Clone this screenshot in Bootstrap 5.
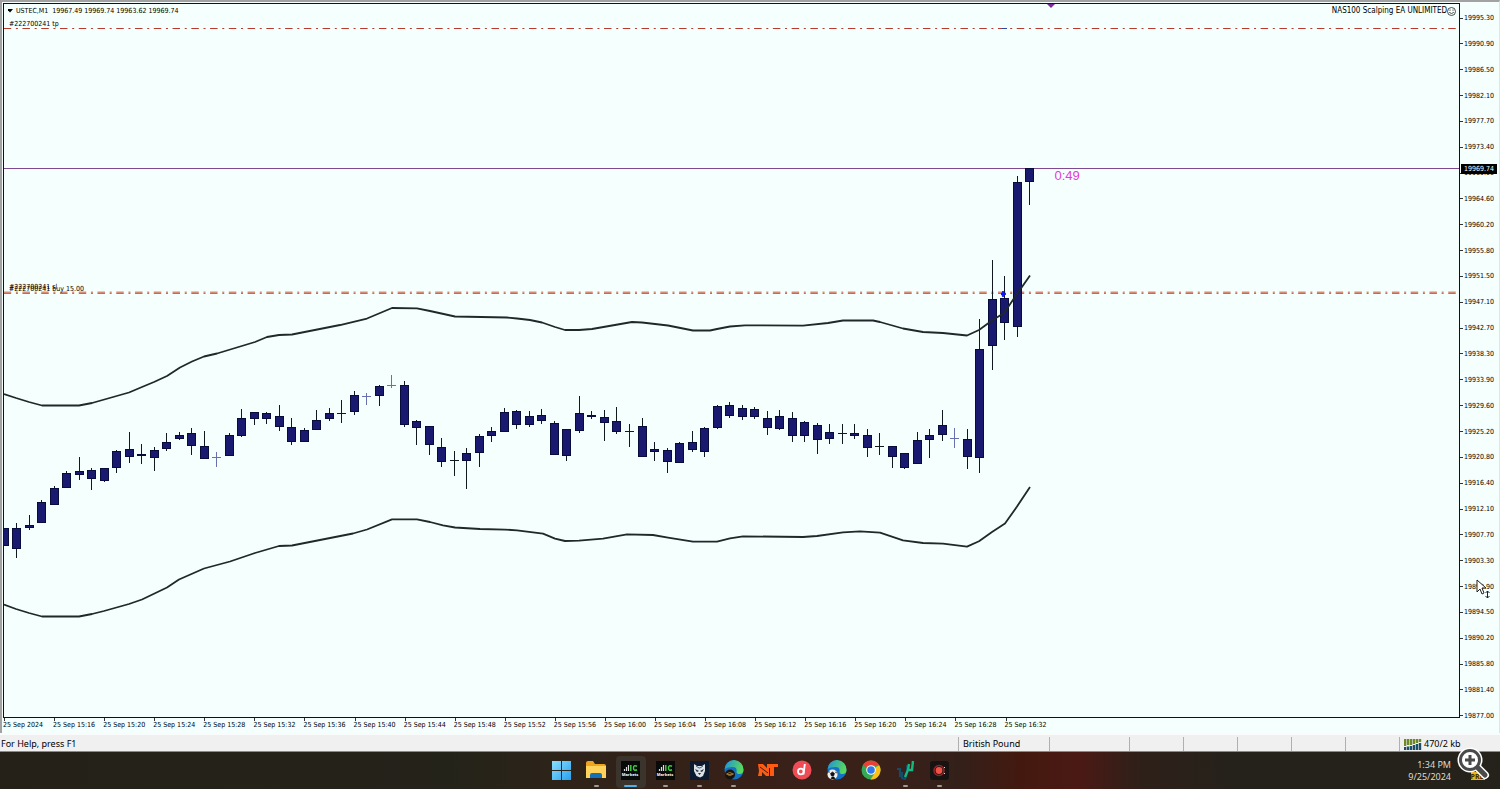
<!DOCTYPE html>
<html lang="en">
<head>
<meta charset="utf-8">
<meta name="viewport" content="width=device-width, initial-scale=1">
<title>USTEC,M1</title>
<link href="https://cdn.jsdelivr.net/npm/bootstrap@5.3.0/dist/css/bootstrap.min.css" rel="stylesheet">
<style>
  body { background: #f5fffd; font-family: "Noto Sans", sans-serif; color: #000; }
  .terminal { border-top: 2px solid #a2a2a2; border-left: 2px solid #a2a2a2; border-right: 1px solid #dfe6e4; padding: 1px 0 0 1px; font: 7px/10px "DejaVu Sans Condensed", "DejaVu Sans", sans-serif; }
  .plot { border: 1px solid #111; min-width: 0; min-height: 0; }
  .plot-svg { position: absolute; inset: 0; width: 100%; height: 100%; display: block; }
  .heading { padding: 2px 3px 0 4px; white-space: pre; }
  .expert { font-size: 8px; }
  .over { position: absolute; white-space: pre; }
  .order-tp { left: 5px; top: 2%; margin-top: 1px; }
  .order-sl { left: 5px; top: 39%; }
  .order-buy { left: 5px; top: 39%; margin-top: 2px; }
  .countdown { left: 72.2%; top: 23%; font: 13px/16px "Liberation Sans", sans-serif; color: #e43ad8; }
  .prices { width: 39px; padding-top: 10px; margin-bottom: -3px; }
  .prices span { padding-right: 5px; }
  .tickmark { width: 3px; height: 1px; background: #333; }
  .prices .bid { left: 1px; top: 23.1%; width: 36px; margin-top: -5px; padding: 0 0 0 3px; background: #000; color: #fff; }
  .times { height: 15px; margin-right: 39px; }
  .times > span { flex: 0 0 3.4375%; white-space: nowrap; position: relative; padding-top: 2px; }
  .times > span::before { content: ""; position: absolute; left: 1px; top: 0; width: 1px; height: 3px; background: #333; }
  .status { background: #f0f0f0; height: 19px; border-top: 2px solid #fafcfc; border-bottom: 1px solid #8b8b84; font-size: 9px; line-height: 17px; }
  .status > div { border-left: 1px solid #b0b0b0; padding-left: 4px; white-space: nowrap; margin-top: 2px; height: 14px; line-height: 14px; }
  .status > div:first-child { border: 0; padding-left: 1px; }
  .w-a { width: 91px; } .w-b { width: 80px; } .w-c { width: 54px; } .w-d { width: 101px; }
  .taskbar { height: 37px; background: linear-gradient(90deg, #252119 0, #24231a 30%, #2e2319 38%, #382018 50%, #3a2118 58%, #34201a 64%, #43190f 68%, #4b1915 72%, #2e2019 76%, #25221b 82%, #24221a 100%); }
  .apps { display: grid; grid-template-columns: repeat(12, 1fr); width: 412px; margin-left: 2px; }
  .apps button { position: relative; height: 32px; margin: 0 2px; border: 0; padding: 0; border-radius: 4px; background: none; display: flex; align-items: center; justify-content: center; }
  .apps button.current { background: #3a342d; }
  .apps button.open::after { content: ""; position: absolute; bottom: 1px; width: 5px; height: 2px; border-radius: 1px; background: #a09a94; }
  .apps button.current::after { width: 13px; background: #53aee6; }
  .clock { position: absolute; right: 49px; top: 7px; font-size: 9px; line-height: 12px; color: #dedbd6; text-align: right; }
  .tray { position: absolute; right: 8px; bottom: 7px; border: 0; padding: 0; background: none; line-height: 0; }
  .pointer { position: absolute; left: 16px; top: 80.2%; }
</style>
</head>
<body>
<div class="vh-100 d-flex flex-column overflow-hidden">
  <main class="terminal flex-grow-1 d-flex flex-column">
    <div class="flex-grow-1 d-flex">
      <section class="plot flex-grow-1 position-relative" aria-label="USTEC one minute chart">
        <svg class="plot-svg" viewBox="4 4 1455 713" preserveAspectRatio="none">
          <g stroke-dasharray="7.5 4.7 2 4.56">
            <path d="M3.7 28.5H1456" stroke="#b83a2c" stroke-width="1"/>
            <path d="M3.7 292.3H1459" stroke="#d98c74" stroke-width="1.4"/>
            <path d="M3.7 293.5H1459" stroke="#55a355" stroke-width="1"/>
          </g>
          <path d="M4 168.5H1459" stroke="#7d4a92"/>
          <path d="M1047 4h8l-4 4z" fill="#7a2b9c"/>
          <path d="M1002 28.5h5" stroke="#3046a0"/>
          <g id="candles" shape-rendering="crispEdges"></g>
          <g fill="none" stroke="#20282a" stroke-width="1.8" stroke-linejoin="round">
            <polyline points="4,394 16,398 29,402 42,405.5 79,405.5 92,403 129,392.5 142,387 154,382 167,376 180,367.5 192,361.5 204,356.5 217,353.5 255,342 267,337 279,335 292,334.5 340,325 367,318.5 392,308 417,308.3 430,311 455,316.5 507,317.5 517,318.5 530,320 542,322.5 555,327 565,330 579,330 592,329 632,322 642,322.5 668,325.5 693,330.5 710,330.5 717,329 730,326.5 745,325.3 803,325.6 828,323 843,320.5 873,320.5 880,322 903,328.5 923,332 943,333 967,335.5 979,330 992,320.5 1004,313 1017,294 1030,275.5"/>
            <polyline points="4,604.5 16,609 29,613 42,616.5 79,616.5 92,614 104,611 129,604 142,599.5 167,587.5 179,579.5 204,568.5 230,561.5 255,553 279,546 292,545.5 353,533.5 367,529.5 392,519.3 417,519.3 430,522 443,525.3 455,527.5 480,529 505,529.6 517,530.3 543,533.6 555,538.6 565,541 579,540.6 603,538.6 627,534.3 653,535 668,537.6 693,541.6 717,541.6 730,538.3 743,536.3 803,537 817,536 843,532.3 860,531.4 880,532.6 903,540.3 923,543 943,543.6 967,546.6 979,541.3 992,532 1005,523.6 1017,506.6 1030,487"/>
          </g>
          <path d="M1003 291l1 2 2 1-2 1-1 2-1-2-1-1 1-1z" fill="#0a14ff" stroke="#0a14ff"/>
        </svg>
        <div class="heading position-relative d-flex justify-content-between">
          <div class="d-flex align-items-center"><svg width="8" height="6" viewBox="0 0 8 6" aria-hidden="true"><path d="M-1 1h6L2 4.500z" fill="#000"/></svg>USTEC,M1  19967.49 19969.74 19963.62 19969.74</div>
          <div class="expert d-flex align-items-center">NAS100 Scalping EA UNLIMITED<svg width="9" height="9" viewBox="0 0 9 9" fill="none" stroke="#222" stroke-width=".8" aria-hidden="true"><circle cx="4.500" cy="4.500" r="4"/><path d="M3 2.500v1.300M6 2.500v1.300M2.200 5.300q2.300 2.500 4.600 0"/></svg></div>
        </div>
        <span class="over order-tp">#222700241 tp</span>
        <span class="over order-sl">#222700241 sl</span>
        <span class="over order-buy">#222700241 buy 15.00</span>
        <span class="over countdown">0:49</span>
      </section>
      <aside class="prices position-relative d-flex flex-column justify-content-between" id="prices">
        <span class="over bid">19969.74</span>
        <svg class="pointer" width="16" height="20" viewBox="0 0 16 20" aria-hidden="true"><path d="M1 1v12l3-3 2 5 2-1-2-5h4z" fill="#fff" stroke="#222"/><path d="M11.500 12v7M9.500 14l2-2 2 2M9.500 17l2 2 2-2" fill="none" stroke="#222"/></svg>
      </aside>
    </div>
    <div class="times d-flex" id="times"></div>
  </main>

  <footer class="status d-flex flex-shrink-0">
    <div class="flex-grow-1">For Help, press F1</div>
    <div class="w-a">British Pound</div><div class="w-b"></div><div class="w-c"></div><div class="w-c"></div><div class="w-c"></div><div class="w-c"></div><div class="w-c"></div>
    <div class="w-d d-flex align-items-center"><svg width="20" height="11" viewBox="0 0 20 11" aria-hidden="true"><path d="M1 0v7M4 0v6M7 0v6M10 0v5M13 0v4M16 0v3" stroke="#6e8a28" stroke-width="2.400"/><path d="M1 8v3M4 7.500v3.500M7 7v4M10 6v5M13 5v6M16 4v7" stroke="#1c5068" stroke-width="2.400"/></svg>470/2 kb</div>
  </footer>

  <nav class="taskbar position-relative d-flex justify-content-center align-items-start flex-shrink-0" aria-label="Taskbar">
    <div class="apps pt-1">
      <button type="button" aria-label="Start"><svg class="mb-1" width="20" height="20"><defs><linearGradient id="win" x2="1" y2="1"><stop stop-color="#8be0ff"/><stop offset="1" stop-color="#28a0ee"/></linearGradient></defs><path d="M0 1h9v9H0zM10 1h9v9h-9zM0 11h9v9H0zM10 11h9v9h-9z" fill="url(#win)"/></svg></button>
      <button type="button" class="open" aria-label="File Explorer"><svg class="mb-1" width="20" height="18"><path d="M0 2q0-2 2-2h5l2 3h9q2 0 2 2v12H0z" fill="#eda51d"/><path d="M0 5h20v12H0z" fill="#ffd35b"/><path d="M4 17v-3q0-2 2-2h8q2 0 2 2v3z" fill="#1670b8"/></svg></button>
      <button type="button" class="open current" aria-label="IC Markets"><svg class="mb-1" width="19" height="19"><path d="M0 0h19v19H0z" fill="#080b09"/><path d="M3.500 10V8M5.500 10V6M7.500 10V4" stroke="#ddd" stroke-width="1.200"/><path d="M9.800 4v6M16 5.200q-3.500-1.500-3.500 1.800t3.500 1.800" fill="none" stroke="#3dcc3d" stroke-width="1.500"/><text x="9" y="15" text-anchor="middle" font-size="4" font-weight="bold" fill="#fff">Markets</text></svg></button>
      <button type="button" class="open" aria-label="IC Markets 2"><svg class="mb-1" width="19" height="19"><path d="M0 0h19v19H0z" fill="#080b09"/><path d="M3.500 10V8M5.500 10V6M7.500 10V4" stroke="#ddd" stroke-width="1.200"/><path d="M9.800 4v6M16 5.200q-3.500-1.500-3.500 1.800t3.500 1.800" fill="none" stroke="#3dcc3d" stroke-width="1.500"/><text x="9" y="15" text-anchor="middle" font-size="4" font-weight="bold" fill="#fff">Markets</text></svg></button>
      <button type="button" class="open" aria-label="Panther"><svg class="mb-1" width="19" height="19"><path d="M0 0h19v19H0z" fill="#0c1a30"/><path d="M4 3l3 2h5l3-2v7l-2 5-3 1.500L6.500 15 4 10z" fill="#dce3e8"/><path d="M5 8l4 2-2 1zM14 8l-4 2 2 1zM8 12h3l-1.500 2z" fill="#17263a"/><path d="M6 5l3 2h1l3-2" fill="none" stroke="#506274"/></svg></button>
      <button type="button" class="open" aria-label="Edge"><svg class="mb-1" width="20" height="20"><defs><linearGradient id="edge" x2="1" y2=".3"><stop stop-color="#1f8fe0"/><stop offset="1" stop-color="#58d85c"/></linearGradient></defs><circle cx="10" cy="10" r="9.500" fill="#1372c4"/><path d="M.5 9A9.500 9.500 0 0 1 19.500 10q0 4-4 4-3 0-3-2 1-5-4-5-5 0-8 2z" fill="url(#edge)"/><circle cx="6" cy="14.500" r="5" fill="#17140f"/><path d="M2.500 14q3-3 7 0-3 3-7 0M4 15l4-1" fill="none" stroke="#bb9140" stroke-width=".8"/></svg></button>
      <button type="button" aria-label="NinjaTrader"><svg class="mb-1" width="20" height="14"><path d="M0 1h5l4 4V1h11v3h-4v9h-4V5h-1v8H8L4 9v4H0l1-5z" fill="#ff5a12"/><path d="M2 4l8 6" stroke="#34201a"/></svg></button>
      <button type="button" aria-label="Music"><svg class="mb-1" width="20" height="20"><circle cx="10" cy="10" r="9.500" fill="#f04c55"/><circle cx="8.800" cy="11.500" r="2.800" fill="none" stroke="#fff" stroke-width="1.800"/><path d="M12.800 4l-1.300 10.500" stroke="#fff" stroke-width="1.900"/></svg></button>
      <button type="button" aria-label="Edge profile"><svg class="mb-1" width="20" height="20"><circle cx="10" cy="10" r="9.500" fill="#1372c4"/><path d="M.5 9A9.500 9.500 0 0 1 19.500 10q0 4-4 4-3 0-3-2 1-5-4-5-5 0-8 2z" fill="url(#edge)"/><circle cx="5.500" cy="14.500" r="5" fill="#eee"/><path d="M5.500 12l2 1.500-1 2.500h-2l-1-2.500zM1 12l2 0M8 12l2 1M4 19l1-2 2 0 1 2" fill="#111" stroke="#111" stroke-width=".7"/></svg></button>
      <button type="button" aria-label="Chrome"><svg class="mb-1" width="20" height="20"><circle cx="10" cy="10" r="9.500" fill="#35a853"/><path d="M10 10L1.800 5.200A9.500 9.500 0 0 1 18.200 5.200H10z" fill="#e94235"/><path d="M10 10L18.200 5.200A9.500 9.500 0 0 1 9.500 19.500l4.500-7z" fill="#fbc116"/><circle cx="10" cy="10" r="4.800" fill="#fff"/><circle cx="10" cy="10" r="3.800" fill="#3478ea"/></svg></button>
      <button type="button" class="open" aria-label="Trading charts"><svg class="mb-1" width="20" height="20" fill="none"><path d="M2 9h3v8M7 12v6l3 1 2-7V5" stroke="#164a68" stroke-width="2.200"/><path d="M10 17l3-7 1-6M14 10h3l1-9" stroke="#12b981" stroke-width="2.400"/></svg></button>
      <button type="button" class="open" aria-label="Recorder"><svg class="mb-1" width="19" height="19"><rect width="19" height="19" rx="3" fill="#171313"/><circle cx="9" cy="9.500" r="5" fill="none" stroke="#8f2725" stroke-width="1.500"/><circle cx="9" cy="9.500" r="3.400" fill="#ef5146"/><path d="M14 7l1-1M14 12l1 1" stroke="#ddd"/></svg></button>
    </div>
    <div class="clock">1:34 PM<br>9/25/2024</div>
    <button type="button" class="tray" aria-label="Zoom in"><svg width="38" height="35" viewBox="0 0 38 35"><path d="M17 25h14v8H17z" fill="#f0b21a"/><text x="23" y="32" font-size="7" font-weight="bold" text-anchor="middle" fill="#3c2b08">PRE</text><path d="M23 20l8 8" stroke="#fff" stroke-width="8" stroke-linecap="round"/><circle cx="16" cy="13" r="12.500" fill="#fff"/><path d="M23 20l8 8" stroke="#4a4a4a" stroke-width="5" stroke-linecap="round"/><circle cx="16" cy="13" r="9.500" fill="#fff" stroke="#4a4a4a" stroke-width="3"/><path d="M16 8v10M11 13h10" stroke="#4a4a4a" stroke-width="3"/></svg></button>
  </nav>
</div>
<script src="https://cdn.jsdelivr.net/npm/bootstrap@5.3.0/dist/js/bootstrap.bundle.min.js"></script>
<script>
  // One entry per minute: high, body top, body bottom, low. Three values make a doji; a fourth "b" colours it blue.
  const bars = [
    [528,528,546,546],[523,528,549,558],[515,525,528,530],[500,502,523,523],[486,488,505,505],[471,473,488,488],[457,471,475,480],[468,470,479,490],[468,468,481,482],[450,451,468,473],
    [432,449,457,463],[444,454,456,464],[447,450,458,471],[433,442,449,451],[432,435,439,440],[428,433,446,455],[431,446,459,459],[452,457,467,"b"],[433,435,456,456],[409,418,436,437],
    [412,412,419,425],[412,413,419,424],[405,416,427,431],[418,427,442,445],[428,430,442,442],[410,420,430,430],[408,413,419,421],[400,413,423],[391,395,412,415],[393,396,405,"b"],
    [385,386,396,406],[375,385,388,"b"],[381,385,425,427],[420,421,428,445],[426,426,445,455],[438,447,462,467],[451,460,476],[448,453,461,489],[434,436,453,467],[427,431,436,442],
    [408,412,432,432],[410,411,425,429],[411,416,425,427],[409,415,421,424],[421,423,455,455],[429,429,456,461],[396,413,431,433],[411,415,417,419],[410,417,423,441],[407,421,432,434],
    [424,431,447],[418,426,457,457],[442,449,452,461],[448,450,462,473],[442,443,463,463],[431,442,450,452],[427,428,452,457],[405,406,428,429],[402,405,416,418],[405,408,417,420],
    [407,409,417,419],[411,418,428,435],[410,416,429,430],[412,418,436,442],[421,422,436,442],[423,425,440,454],[424,432,439,444],[424,433,444],[424,433,436,439],[429,435,448,457],
    [433,446,455],[446,446,457,468],[453,453,468,469],[432,440,464,464],[429,435,440,458],[410,425,435,441],[428,438,448,"b"],[429,439,457,469],[319,349,458,473],[260,299,346,370],
    [276,298,323,340],[176,182,327,337],[168,168,182,205]
  ];
  let shapes = "";
  bars.forEach((b, i) => {
    const x = Math.floor(4 + i * 12.51);
    const doji = b.length === 3 || b[3] === "b";
    const ink = b[3] === "b" ? "#6970ae" : "#111820";
    const low = doji ? b[2] : b[3];
    shapes += `<rect x="${x}" y="${b[0]}" width="1" height="${low - b[0]}" fill="${ink}"/>`;
    shapes += doji
      ? `<rect x="${x - 4}" y="${b[1]}" width="9" height="1" fill="${ink}"/>`
      : `<rect x="${x - 4}" y="${b[1]}" width="9" height="${b[2] - b[1]}" fill="#080c3c"/>` +
        (b[2] - b[1] > 2 ? `<rect x="${x - 3}" y="${b[1] + 1}" width="7" height="${b[2] - b[1] - 2}" fill="#191970"/>` : "");
  });
  document.getElementById("candles").innerHTML = shapes;

  const levels = "19995.30 19990.90 19986.50 19982.10 19977.70 19973.40 19969.00 19964.60 19960.20 19955.80 19951.50 19947.10 19942.70 19938.30 19933.90 19929.60 19925.20 19920.80 19916.40 19912.10 19907.70 19903.30 19898.90 19894.50 19890.20 19885.80 19881.40 19877.00".split(" ");
  document.getElementById("prices").insertAdjacentHTML("afterbegin",
    levels.map(v => `<div class="d-flex align-items-center"><i class="tickmark me-auto"></i><span>${v}</span></div>`).join(""));

  const stamps = ["2024"];
  for (let m = 16; m <= 92; m += 4) stamps.push((m < 60 ? "15:" : "16:") + String(m % 60).padStart(2, "0"));
  document.getElementById("times").innerHTML = stamps.map(s => `<span>25 Sep ${s}</span>`).join("");
</script>
</body>
</html>
